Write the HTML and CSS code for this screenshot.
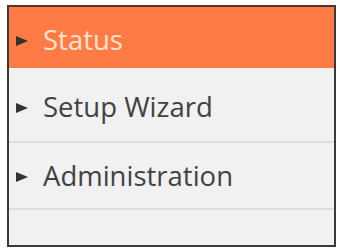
FILE: index.html
```html
<!DOCTYPE html>
<html>
<head>
<meta charset="utf-8">
<link rel="stylesheet" href="styles.css">
</head>
<body>
<div class="menu">
  <div class="item active"><svg class="arrow" viewBox="0 0 12 10"><polygon points="0,0 12,5 0,10"/></svg><span class="label">Status</span></div>
  <div class="item tall"><svg class="arrow" viewBox="0 0 12 10"><polygon points="0,0 12,5 0,10"/></svg><span class="label">Setup Wizard</span></div>
  <div class="item"><svg class="arrow" viewBox="0 0 12 10"><polygon points="0,0 12,5 0,10"/></svg><span class="label">Administration</span></div>
  <div class="empty"></div>
</div>
</body>
</html>
```
FILE: styles.css
```css
html, body {
  margin: 0;
  padding: 0;
  background: #ffffff;
}
body {
  padding: 5px 4px 0 7px;
  font-family: "Open Sans", "Liberation Sans", sans-serif;
}
.menu {
  width: 325px;
  border: 2px solid #3a3a3a;
  border-top-color: #5a3328;
  background: #f1f1f1;
}
.item {
  display: flex;
  align-items: center;
  height: 67px;
  box-sizing: border-box;
  border-bottom: 2px solid #dedede;
  padding-left: 7px;
  color: #424242;
}
.item.active {
  background: #ff7b45;
  color: #ffe3cf;
  height: 61px;
  border-bottom: none;
  padding-top: 3px;
}
.item.tall {
  height: 75px;
  padding-top: 4px;
}
.arrow {
  width: 12px;
  height: 10px;
  fill: #333333;
  margin-right: 15px;
  margin-top: 3px;
  flex: none;
}
.label {
  font-size: 27.5px;
}
.empty {
  height: 35px;
}
```
